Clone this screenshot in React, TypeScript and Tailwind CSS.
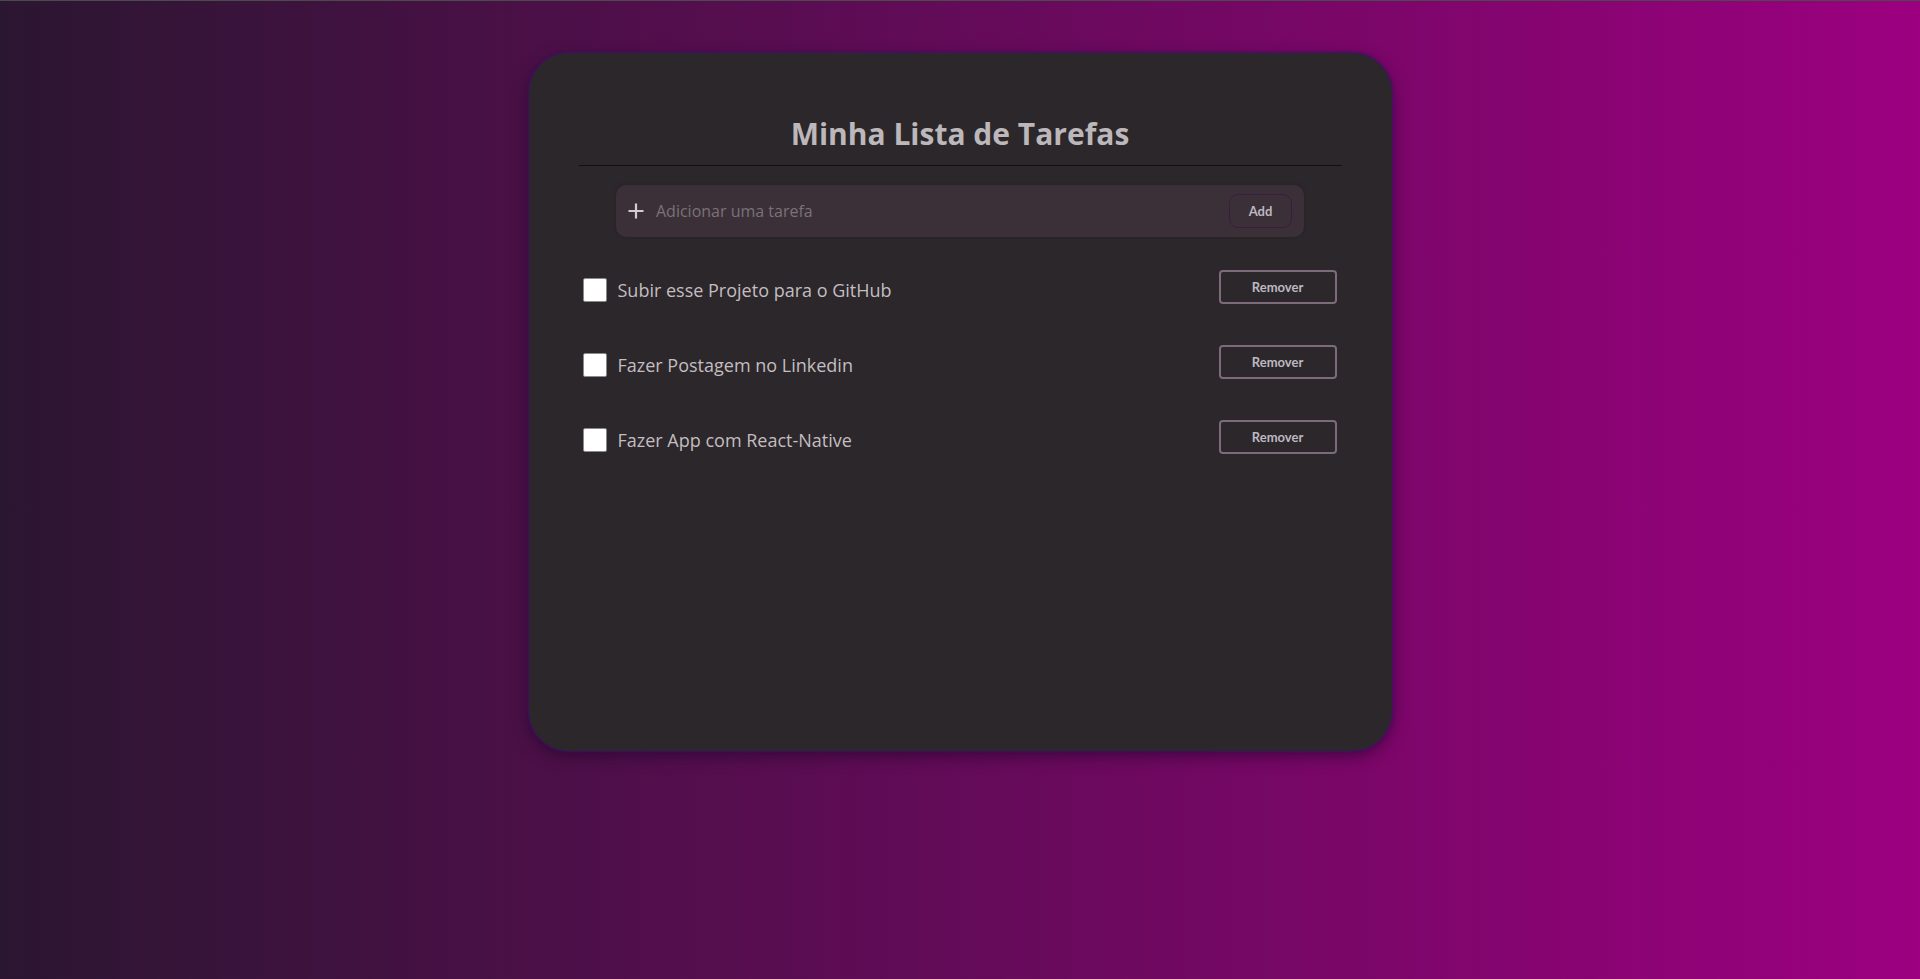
import { useState } from 'react'

interface Task {
  id: number
  text: string
  done: boolean
}

const INITIAL_TASKS: Task[] = [
  { id: 1, text: 'Subir esse Projeto para o GitHub', done: false },
  { id: 2, text: 'Fazer Postagem no Linkedin', done: false },
  { id: 3, text: 'Fazer App com React-Native', done: false },
]

function PlusIcon() {
  return (
    <svg width="18" height="18" viewBox="0 0 18 18" className="shrink-0">
      <path d="M9 1.5v15M1.5 9h15" stroke="#d2cbcf" strokeWidth="2.2" />
    </svg>
  )
}

export default function App() {
  const [tasks, setTasks] = useState<Task[]>(INITIAL_TASKS)
  const [value, setValue] = useState('')

  const addTask = () => {
    if (!value.trim()) return
    setTasks([...tasks, { id: Date.now(), text: value.trim(), done: false }])
    setValue('')
  }

  const toggle = (id: number) => {
    setTasks(tasks.map((t) => (t.id === id ? { ...t, done: !t.done } : t)))
  }

  const remove = (id: number) => {
    setTasks(tasks.filter((t) => t.id !== id))
  }

  return (
    <div className="min-h-screen w-full border-t border-[#4b4b4b] bg-[linear-gradient(to_right,#2b1631,#9c0080)] flex justify-center pt-[52px] font-['Open_Sans',sans-serif]">
      {/* Card */}
      <div className="w-[863px] h-[698px] rounded-[40px] bg-[#2b272a] px-[50px] pt-[61px] shadow-[0_0_2px_1px_rgba(62,18,112,0.9),0_5px_16px_rgba(25,0,35,0.55)]">
        <h1 className="text-center text-[30px] leading-[40px] font-bold text-[#bcb7ba]">
          Minha Lista de Tarefas
        </h1>
        <div className="mt-[11px] h-px bg-[#121012]" />

        {/* Input */}
        <div className="mx-auto mt-[19px] w-[688px] h-[52px] rounded-[10px] bg-[#3b3038] shadow-[0_0_4px_rgba(0,0,0,0.15)] flex items-center pl-[11px] pr-[12px] gap-[11px]">
          <PlusIcon />
          <input
            value={value}
            onChange={(e) => setValue(e.target.value)}
            onKeyDown={(e) => e.key === 'Enter' && addTask()}
            placeholder="Adicionar uma tarefa"
            className="flex-1 bg-transparent outline-none text-[16px] text-[#c4bdc1] placeholder:text-[#7a7277]"
          />
          <button
            onClick={addTask}
            className="w-[63px] h-[34px] pt-[2px] rounded-[9px] border border-[#3d1a42] text-[13px] font-bold text-[#bdb8c2] font-['Lato',sans-serif]"
          >
            Add
          </button>
        </div>

        {/* Tasks */}
        <ul className="mt-[33px] flex flex-col gap-[41px]">
          {tasks.map((task) => (
            <li key={task.id} className="h-[34px] flex items-start justify-between">
              <label className="flex items-center mt-[8px] ml-[4px] gap-[11px] cursor-pointer">
                <input
                  type="checkbox"
                  checked={task.done}
                  onChange={() => toggle(task.id)}
                  className="appearance-none w-[24px] h-[24px] rounded-[2px] border border-[#8a8a8a] bg-white checked:bg-[#7a4a8a]"
                />
                <span
                  className={`text-[18px] leading-[24px] text-[#c4bdc1] ${task.done ? 'line-through opacity-60' : ''}`}
                >
                  {task.text}
                </span>
              </label>
              <button
                onClick={() => remove(task.id)}
                className="mr-[5px] w-[118px] h-[34px] pt-[1px] rounded-[4px] border-2 border-[#7d6b7b] text-[13px] font-bold text-[#bdb8c2] font-['Lato',sans-serif]"
              >
                Remover
              </button>
            </li>
          ))}
        </ul>
      </div>
    </div>
  )
}
